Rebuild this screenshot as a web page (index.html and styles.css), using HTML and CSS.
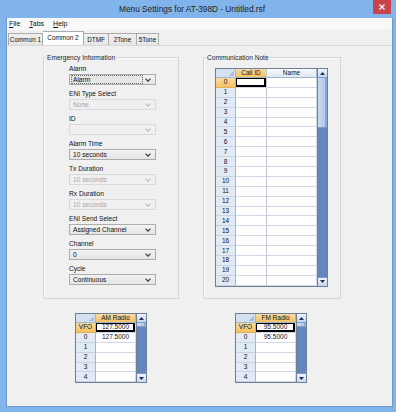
FILE: index.html
```html
<!DOCTYPE html>
<html>
<head>
<meta charset="utf-8">
<link rel="stylesheet" href="styles.css">
</head>
<body>
<div class="window">
  <div class="titlebar">
    <span class="title">Menu Settings for AT-398D - Untitled.rsf</span>
    <div class="close"><svg width="6" height="6" viewBox="0 0 6 6"><path d="M0.5 0.5 L5.5 5.5 M5.5 0.5 L0.5 5.5" stroke="#fff" stroke-width="1.2"/></svg></div>
  </div>
  <div class="client">
    <div class="menubar">
      <span><u>F</u>ile</span><span><u>T</u>abs</span><span><u>H</u>elp</span>
    </div>
    <div class="tabs">
      <div class="tab w-c1">Common 1</div>
      <div class="tab active w-c2">Common 2</div>
      <div class="tab w-dtmf">DTMF</div>
      <div class="tab w-2t">2Tone</div>
      <div class="tab w-5t">5Tone</div>
    </div>
    <div class="page">
      <div class="top">
        <div class="group emergency">
          <div class="legend">Emergency Information</div>
          <div class="fields">
            <div class="field"><div class="lbl">Alarm</div><div class="combo"><span class="val focus">Alarm</span><svg class="arr" width="6" height="4" viewBox="0 0 6 4"><path d="M0.5 0.7 L3 3.2 L5.5 0.7" fill="none" stroke="#333" stroke-width="1.1"/></svg></div></div>
            <div class="field"><div class="lbl">ENI Type Select</div><div class="combo dis"><span class="val">None</span><svg class="arr" width="6" height="4" viewBox="0 0 6 4"><path d="M0.5 0.7 L3 3.2 L5.5 0.7" fill="none" stroke="#bbb" stroke-width="1.1"/></svg></div></div>
            <div class="field"><div class="lbl">ID</div><div class="combo dis"><span class="val"></span><svg class="arr" width="6" height="4" viewBox="0 0 6 4"><path d="M0.5 0.7 L3 3.2 L5.5 0.7" fill="none" stroke="#bbb" stroke-width="1.1"/></svg></div></div>
            <div class="field"><div class="lbl">Alarm Time</div><div class="combo"><span class="val">10 seconds</span><svg class="arr" width="6" height="4" viewBox="0 0 6 4"><path d="M0.5 0.7 L3 3.2 L5.5 0.7" fill="none" stroke="#333" stroke-width="1.1"/></svg></div></div>
            <div class="field"><div class="lbl">Tx Duration</div><div class="combo dis"><span class="val">10 seconds</span><svg class="arr" width="6" height="4" viewBox="0 0 6 4"><path d="M0.5 0.7 L3 3.2 L5.5 0.7" fill="none" stroke="#bbb" stroke-width="1.1"/></svg></div></div>
            <div class="field"><div class="lbl">Rx Duration</div><div class="combo dis"><span class="val">10 seconds</span><svg class="arr" width="6" height="4" viewBox="0 0 6 4"><path d="M0.5 0.7 L3 3.2 L5.5 0.7" fill="none" stroke="#bbb" stroke-width="1.1"/></svg></div></div>
            <div class="field"><div class="lbl">ENI Send Select</div><div class="combo"><span class="val">Assigned Channel</span><svg class="arr" width="6" height="4" viewBox="0 0 6 4"><path d="M0.5 0.7 L3 3.2 L5.5 0.7" fill="none" stroke="#333" stroke-width="1.1"/></svg></div></div>
            <div class="field"><div class="lbl">Channel</div><div class="combo"><span class="val">0</span><svg class="arr" width="6" height="4" viewBox="0 0 6 4"><path d="M0.5 0.7 L3 3.2 L5.5 0.7" fill="none" stroke="#333" stroke-width="1.1"/></svg></div></div>
            <div class="field"><div class="lbl">Cycle</div><div class="combo"><span class="val">Continuous</span><svg class="arr" width="6" height="4" viewBox="0 0 6 4"><path d="M0.5 0.7 L3 3.2 L5.5 0.7" fill="none" stroke="#333" stroke-width="1.1"/></svg></div></div>
          </div>
        </div>
        <div class="group comm">
          <div class="legend">Communication Note</div>
          <div class="gtable">
            <div class="gcells cols-comm">
              <div class="c corner"></div><div class="c ch sel">Call ID</div><div class="c ch">Name</div>
              <div class="c rh sel">0</div><div class="c cur"></div><div class="c"></div>
              <div class="c rh">1</div><div class="c"></div><div class="c"></div>
              <div class="c rh">2</div><div class="c"></div><div class="c"></div>
              <div class="c rh">3</div><div class="c"></div><div class="c"></div>
              <div class="c rh">4</div><div class="c"></div><div class="c"></div>
              <div class="c rh">5</div><div class="c"></div><div class="c"></div>
              <div class="c rh">6</div><div class="c"></div><div class="c"></div>
              <div class="c rh">7</div><div class="c"></div><div class="c"></div>
              <div class="c rh">8</div><div class="c"></div><div class="c"></div>
              <div class="c rh">9</div><div class="c"></div><div class="c"></div>
              <div class="c rh">10</div><div class="c"></div><div class="c"></div>
              <div class="c rh">11</div><div class="c"></div><div class="c"></div>
              <div class="c rh">12</div><div class="c"></div><div class="c"></div>
              <div class="c rh">13</div><div class="c"></div><div class="c"></div>
              <div class="c rh">14</div><div class="c"></div><div class="c"></div>
              <div class="c rh">15</div><div class="c"></div><div class="c"></div>
              <div class="c rh">16</div><div class="c"></div><div class="c"></div>
              <div class="c rh">17</div><div class="c"></div><div class="c"></div>
              <div class="c rh">18</div><div class="c"></div><div class="c"></div>
              <div class="c rh">19</div><div class="c"></div><div class="c"></div>
              <div class="c rh">20</div><div class="c"></div><div class="c"></div>
            </div>
            <div class="vscroll">
              <div class="sb-btn"><svg width="5" height="3" viewBox="0 0 5 3"><path d="M0 3 L2.5 0 L5 3Z" fill="#1d2f4a"/></svg></div>
              <div class="sb-thumb big"></div>
              <div class="sb-track"></div>
              <div class="sb-btn down"><svg width="5" height="3" viewBox="0 0 5 3"><path d="M0 0 L2.5 3 L5 0Z" fill="#1d2f4a"/></svg></div>
            </div>
          </div>
        </div>
      </div>
      <div class="bottom">
        <div class="gtable">
          <div class="gcells cols-radio">
            <div class="c corner"></div><div class="c ch sel">AM Radio</div>
            <div class="c rh sel">VFO</div><div class="c cur">127.5000</div>
            <div class="c rh">0</div><div class="c">127.5000</div>
            <div class="c rh">1</div><div class="c"></div>
            <div class="c rh">2</div><div class="c"></div>
            <div class="c rh">3</div><div class="c"></div>
            <div class="c rh">4</div><div class="c"></div>
          </div>
          <div class="vscroll">
            <div class="sb-btn"><svg width="5" height="3" viewBox="0 0 5 3"><path d="M0 3 L2.5 0 L5 3Z" fill="#1d2f4a"/></svg></div>
            <div class="sb-thumb small"></div>
            <div class="sb-track"></div>
            <div class="sb-btn down"><svg width="5" height="3" viewBox="0 0 5 3"><path d="M0 0 L2.5 3 L5 0Z" fill="#1d2f4a"/></svg></div>
          </div>
        </div>
        <div class="gtable">
          <div class="gcells cols-radio">
            <div class="c corner"></div><div class="c ch sel">FM Radio</div>
            <div class="c rh sel">VFO</div><div class="c cur">95.5000</div>
            <div class="c rh">0</div><div class="c">95.5000</div>
            <div class="c rh">1</div><div class="c"></div>
            <div class="c rh">2</div><div class="c"></div>
            <div class="c rh">3</div><div class="c"></div>
            <div class="c rh">4</div><div class="c"></div>
          </div>
          <div class="vscroll">
            <div class="sb-btn"><svg width="5" height="3" viewBox="0 0 5 3"><path d="M0 3 L2.5 0 L5 3Z" fill="#1d2f4a"/></svg></div>
            <div class="sb-thumb small"></div>
            <div class="sb-track"></div>
            <div class="sb-btn down"><svg width="5" height="3" viewBox="0 0 5 3"><path d="M0 0 L2.5 3 L5 0Z" fill="#1d2f4a"/></svg></div>
          </div>
        </div>
      </div>
    </div>
  </div>
</div>
</body>
</html>
```

FILE: styles.css
```css
* { box-sizing: border-box; margin: 0; padding: 0; }
html, body { width: 396px; height: 412px; overflow: hidden; }
body {
  font-family: "Liberation Sans", Arial, sans-serif;
  font-size: 6.6px;
  color: #111;
  background: #80b4ea;
}
.window {
  width: 396px;
  height: 412px;
  display: flex;
  flex-direction: column;
  background: #80b4ea;
}
.titlebar {
  height: 18px;
  flex: none;
  display: flex;
  align-items: flex-start;
}
.title {
  margin-left: 119px;
  margin-top: 4px;
  font-size: 8.3px;
  line-height: 10px;
  color: #222;
  white-space: nowrap;
}
.close {
  margin-left: auto;
  margin-right: 5px;
  width: 18px;
  height: 14px;
  background: #c6444b;
  display: flex;
  align-items: center;
  justify-content: center;
}
.close svg { display: block; }
.client {
  flex: 1;
  margin: 0 3px 5px 6px;
  border: 1px solid #6d97c6;
  border-top: none;
  background: #f0f0f0;
  display: flex;
  flex-direction: column;
}
.menubar {
  height: 12px;
  flex: none;
  background: #f8f8f8;
  display: flex;
  align-items: center;
  gap: 9px;
  padding-left: 2px;
  font-size: 7px;
  line-height: 8px;
}
.menubar u { text-decoration-thickness: 0.6px; text-underline-offset: 1px; }
.tabs {
  height: 15px;
  flex: none;
  display: flex;
  align-items: flex-end;
  padding-left: 1px;
}
.tab {
  height: 12px;
  border: 1px solid #acacac;
  border-bottom: none;
  background: linear-gradient(#f0f0f0, #e5e5e5);
  font-size: 6.4px;
  line-height: 11px;
  text-align: center;
  white-space: nowrap;
}
.tab + .tab { border-left: none; }
.tab.active {
  height: 14px;
  background: #fff;
  border-left: none;
  line-height: 12px;
}
.w-c1 { width: 35px; }
.w-c2 { width: 41px; }
.w-dtmf { width: 25px; }
.w-2t { width: 28px; }
.w-5t { width: 22px; }
.page {
  flex: 1;
  border-top: 1px solid #d9d9d9;
  display: flex;
  flex-direction: column;
}
.top {
  display: flex;
  gap: 24px;
  padding-left: 36px;
  margin-top: 11px;
}
.group {
  height: 242px;
  border: 1px solid #d5d5d5;
  box-shadow: inset 1px 1px 0 #fbfbfb;
}
.emergency { width: 136px; }
.comm { width: 138px; }
.legend {
  width: max-content;
  margin: -5px 0 0 2px;
  padding: 0 1px;
  background: #f0f0f0;
  line-height: 9px;
  color: #1e1e1e;
}
.fields {
  padding: 3px 0 0 25px;
  display: flex;
  flex-direction: column;
  gap: 5px;
}
.field { display: flex; flex-direction: column; gap: 1px; }
.lbl { line-height: 8px; height: 8px; white-space: nowrap; }
.combo {
  width: 87px;
  height: 11px;
  border: 1px solid #acacac;
  background: linear-gradient(#f3f3f3, #e4e4e4);
  display: flex;
  align-items: center;
  justify-content: space-between;
  padding: 0 4px 0 1px;
}
.combo .val {
  line-height: 9px;
  height: 9px;
  padding-left: 2px;
  white-space: nowrap;
}
.combo .val.focus {
  width: 72px;
  border: 1px dotted #6a6a6a;
  background: #e6e6e6;
  line-height: 7px;
  padding-left: 1px;
}
.combo.dis {
  border-color: #d9d9d9;
  background: #f0f0f0;
  color: #a6a6a6;
}
.arr { display: block; flex: none; }
.comm .gtable { margin: 6px 0 0 11px; }
.gtable {
  display: flex;
  width: max-content;
  border: 1px solid #6e7f96;
  background: #fff;
}
.gcells {
  display: grid;
  grid-template-rows: 9px;
  grid-auto-rows: 9.9px;
}
.cols-comm { grid-template-columns: 20px 31px 50px; }
.cols-radio { grid-template-columns: 20px 40px; }
.c {
  border-right: 1px solid #d0d7e5;
  border-bottom: 1px solid #d0d7e5;
  display: flex;
  align-items: center;
  justify-content: center;
  white-space: nowrap;
  line-height: 8px;
  font-size: 6.5px;
  overflow: hidden;
}
.cols-comm .c:nth-child(3n+2) { border-right-color: #c3c8cf; }
.rh {
  background: #e2eaf6;
  border-right-color: #9eb6ce;
  border-bottom-color: #c4d3e6;
}
.ch {
  background: linear-gradient(#f8fafd, #dfe6f0);
  border-right-color: #9eb6ce;
  border-bottom-color: #9eb6ce;
}
.corner {
  background-color: #d5e1f1;
  border-right-color: #9eb6ce;
  border-bottom-color: #9eb6ce;
  background-image: linear-gradient(135deg, transparent 50%, #aac0dc 50%);
  background-size: 5px 5px;
  background-repeat: no-repeat;
  background-position: right 1px bottom 1px;
}
.sel { background: linear-gradient(#fadba6, #f4c161); }
.rh.sel { border-bottom-color: #e2b25a; }
.cur { box-shadow: inset 0 0 0 1px #000, inset -1px -1px 0 1px #000; }
.vscroll {
  width: 10px;
  display: flex;
  flex-direction: column;
  border-left: 1px solid #6e7f96;
  background: #6586be;
}
.sb-btn {
  height: 9px;
  flex: none;
  background: linear-gradient(#eef4fc, #c4d6ee);
  border-bottom: 1px solid #7f9bc3;
  display: flex;
  align-items: center;
  justify-content: center;
}
.sb-btn svg { display: block; }
.sb-btn.down { border-bottom: none; border-top: 1px solid #7f9bc3; }
.sb-thumb {
  flex: none;
  background: linear-gradient(90deg, #c8daf2, #b3caea);
  border-right: 2px solid #8aa6d2;
  border-bottom: 1px solid #7f9bc3;
}
.sb-thumb.big { height: 50px; }
.sb-thumb.small { height: 4px; }
.sb-track { flex: 1; }
.bottom {
  display: flex;
  gap: 88px;
  padding-left: 68px;
  margin-top: 14px;
}
```
